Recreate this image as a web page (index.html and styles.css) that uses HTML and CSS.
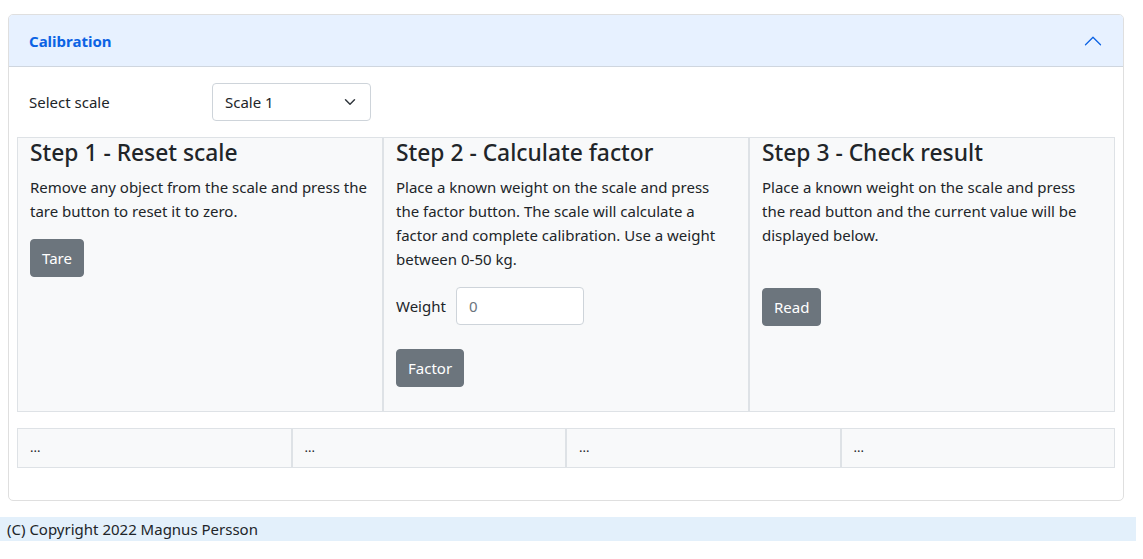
FILE: index.html
```html
<!DOCTYPE html>
<html>
<head>
<meta charset="utf-8">
<link rel="stylesheet" href="styles.css">
</head>
<body>
<main class="page">
  <section class="accordion">
    <div class="acc-header">
      <span class="acc-title">Calibration</span>
      <svg class="acc-chevron" viewBox="0 0 16 16" width="20" height="20"><path fill="#0c63e4" d="M1.646 11.354a.5.5 0 0 0 .708 0L8 5.707l5.646 5.647a.5.5 0 0 0 .708-.708l-6-6a.5.5 0 0 0-.708 0l-6 6a.5.5 0 0 0 0 .708z"/></svg>
    </div>
    <div class="acc-body">
      <div class="select-row">
        <label class="select-label">Select scale</label>
        <div class="select">
          <span>Scale 1</span>
          <svg class="select-arrow" viewBox="0 0 16 16" width="16" height="12"><path fill="none" stroke="#343a40" stroke-linecap="round" stroke-linejoin="round" stroke-width="2" d="m2 5 6 6 6-6"/></svg>
        </div>
      </div>
      <div class="steps">
        <div class="step">
          <h4>Step 1 - Reset scale</h4>
          <p>Remove any object from the scale and press the tare button to reset it to zero.</p>
          <button class="btn">Tare</button>
        </div>
        <div class="step">
          <h4>Step 2 - Calculate factor</h4>
          <p>Place a known weight on the scale and press the factor button. The scale will calculate a factor and complete calibration. Use a weight between 0-50 kg.</p>
          <div class="weight-row">
            <label>Weight</label>
            <div class="input">0</div>
          </div>
          <button class="btn">Factor</button>
        </div>
        <div class="step">
          <h4>Step 3 - Check result</h4>
          <p class="p-extra">Place a known weight on the scale and press the read button and the current value will be displayed below.</p>
          <button class="btn">Read</button>
        </div>
      </div>
      <div class="results">
        <div class="cell">...</div>
        <div class="cell">...</div>
        <div class="cell">...</div>
        <div class="cell">...</div>
      </div>
    </div>
  </section>
</main>
<footer class="footer">(C) Copyright 2022 Magnus Persson</footer>
</body>
</html>
```
FILE: styles.css
```css
* { box-sizing: border-box; }
body {
  margin: 0;
  font-family: "Noto Sans", "Open Sans", sans-serif;
  font-size: 15px;
  line-height: 24px;
  color: #212529;
  background: #fff;
}
.page {
  padding: 14px 19px 0 8px;
}
.accordion {
  border: 1px solid #dfdfdf;
  border-radius: 5px;
  overflow: hidden;
}
.acc-header {
  display: flex;
  align-items: center;
  justify-content: space-between;
  padding: 14px 20px 13px 20px;
  background: #e7f1ff;
  border-bottom: 1px solid #cfd6df;
}
.acc-title {
  color: #0c63e4;
  font-weight: 700;
  font-size: 15px;
}
.acc-chevron { display: block; }
.acc-body {
  padding: 16px 20px 32px;
}
.select-row {
  display: flex;
  align-items: center;
  margin: 0 -12px;
}
.select-label {
  width: 183px;
  padding: 0 12px;
}
.select {
  width: 159px;
  margin-left: 12px;
  height: 38px;
  border: 1px solid #ced4da;
  border-radius: 4px;
  background: #fff;
  display: flex;
  align-items: center;
  justify-content: space-between;
  padding: 0 12px;
}
.select-arrow { display: block; }
.steps {
  display: grid;
  grid-template-columns: repeat(3, 1fr);
  margin: 16px -12px 0;
}
.step {
  background: #f8f9fa;
  border: 1px solid #dee2e6;
  padding: 0 12px 24px;
}
.step h4 {
  margin: 0 0 8px;
  font-size: 22.8px;
  font-weight: 500;
  line-height: 29px;
}
.step p {
  margin: 0 0 16px;
}
.step .p-extra {
  margin-bottom: 41px;
}
.btn {
  display: block;
  font: inherit;
  color: #fff;
  background: #6c757d;
  border: 1px solid #6c757d;
  border-radius: 4px;
  padding: 6px 11px;
  line-height: 24px;
}
.weight-row {
  display: flex;
  align-items: center;
  gap: 10px;
  margin-bottom: 24px;
}
.input {
  width: 128px;
  height: 38px;
  border: 1px solid #ced4da;
  border-radius: 4px;
  background: #fff;
  padding: 6px 12px;
  color: #6c757d;
}
.results {
  display: grid;
  grid-template-columns: repeat(4, 1fr);
  margin: 16px -12px 0;
}
.cell {
  background: #f8f9fa;
  border: 1px solid #dee2e6;
  padding: 6px 12px 7px;
  font-size: 13px;
  line-height: 25px;
}
.footer {
  margin: 16px 7px 0 0;
  background: #e3f0fb;
  padding: 0 7px;
  line-height: 24px;
}
```
